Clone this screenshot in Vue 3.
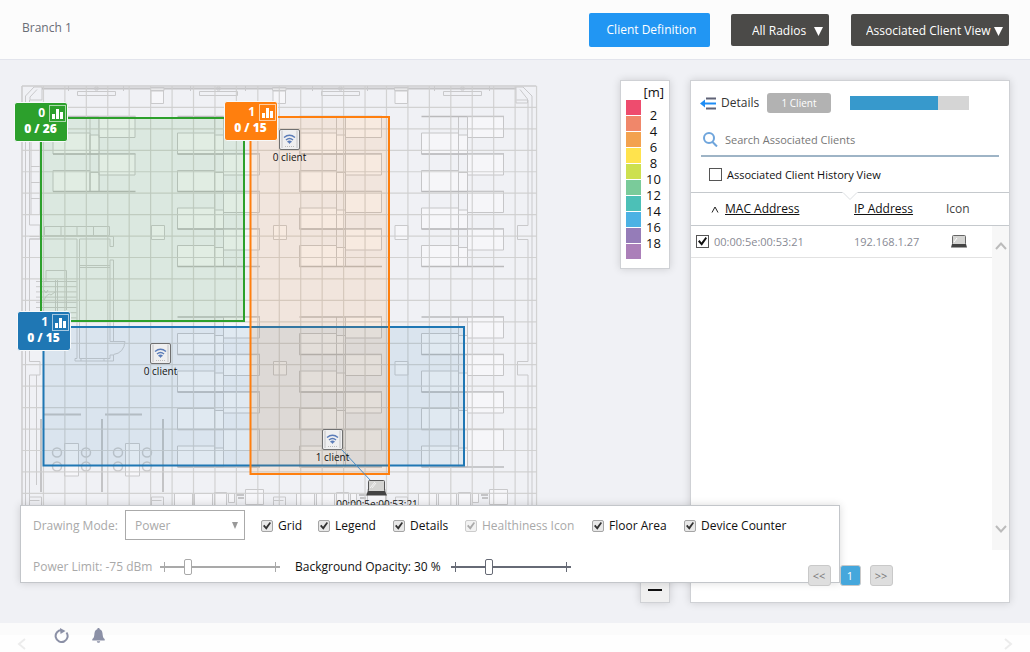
<script setup>
import { ref } from 'vue'

const radio = ref('All Radios')
const view = ref('Associated Client View')
const mode = ref('Power')
const powerLimit = ref(-75)
const opacity = ref(30)
const search = ref('')
const history = ref(false)
const usage = ref(74)

const legend = [
  { color: '#ee4c6e', label: '2' },
  { color: '#f0876a', label: '4' },
  { color: '#f3a24f', label: '6' },
  { color: '#ffe34d', label: '8' },
  { color: '#cde04e', label: '10' },
  { color: '#7acb9a', label: '12' },
  { color: '#4cc0b7', label: '14' },
  { color: '#4cb2e4', label: '16' },
  { color: '#957cb8', label: '18' },
  { color: '#ab7fb9', label: '' }
]

const toggles = ref([
  { id: 'grid', label: 'Grid', on: true },
  { id: 'legend', label: 'Legend', on: true },
  { id: 'details', label: 'Details', on: true },
  { id: 'health', label: 'Healthiness Icon', on: true, disabled: true },
  { id: 'floor', label: 'Floor Area', on: true },
  { id: 'counter', label: 'Device Counter', on: true }
])

const clients = ref([{ mac: '00:00:5e:00:53:21', ip: '192.168.1.27', on: true }])

const gridX = Array.from({ length: 25 }, (_, i) => 22 + i * 21.44)
const gridY = Array.from({ length: 20 }, (_, i) => 86 + i * 21.44)

const desks = []
for (const x of [177.5, 299.5, 421.5]) {
  for (const y of [116.5, 317]) desks.push({ x, y, rows: 4 })
}
desks.push({ x: 53, y: 116.5, rows: 2 })

const bays = [0, 122, 244, 366]
const chairs = []
for (const dx of [0, 61]) {
  for (const x of [57, 86]) for (const y of [452.5, 466.5]) chairs.push({ x: x + dx, y })
}
const stairs = Array.from({ length: 8 }, (_, i) => 281.5 + i * 5.2)

const accessPoints = [
  { x: 279, y: 129, label: '0 client' },
  { x: 150, y: 343, label: '0 client' },
  { x: 322, y: 429, label: '1 client' }
]
const badges = [
  { kind: 'green', count: 0, total: '0 / 26' },
  { kind: 'orange', count: 1, total: '0 / 15' },
  { kind: 'blue', count: 1, total: '0 / 15' }
]
</script>

<template>
  <div class="page">
    <header class="topbar">
      <h1>Branch 1</h1>
      <button class="primary" type="button">Client Definition</button>
      <span class="dark radio">
        <select v-model="radio" aria-label="Radios"><option>All Radios</option></select>
        <svg viewBox="0 0 9 9"><path d="M0 0h9L4.500 9z" /></svg>
      </span>
      <span class="dark view">
        <select v-model="view" aria-label="View"><option>Associated Client View</option></select>
        <svg viewBox="0 0 9 9"><path d="M0 0h9L4.500 9z" /></svg>
      </span>
    </header>

    <main>
      <section class="map" aria-label="Floor map">
        <svg class="plan" viewBox="20 80 520 430" width="520" height="430">
          <g class="walls">
            <path d="M22 86H536M22 86V510M25.500 96V510M29.500 100V225H40V239H29.500M29.500 239V361.500H40V375H29.500V510M36.500 375V485M31 141.500V215M40 141.500V215M31 166.500H40M31 182.500H40M31 198.500H40" />
            <path d="M25.500 96L34 87H42V100H30V97L37 89.500" />
            <path d="M532 96L523 87H516V103H527.500V99L520 89.500M516.500 100H527M532 96V510M528 100V225.500H517.500V239.500H528V361.500H517.500V375H528V510" />
            <path class="heavy" d="M42 88.500H516" />
            <g v-for="dx in bays" :key="'b' + dx">
              <path v-if="dx < 366" class="fill" :d="`M${150.500 + dx} 87.500h13.500v3h-13.500zM${151 + dx} 91h12.500v12.500h-12.500z`" />
              <path :d="`M${77.500 + dx} 91.500h38v4h-38zM${95 + dx} 87h3v3h-3zM${68.500 + dx} 86v5M${123.500 + dx} 86v5`" />
            </g>
            <path class="fill" d="M151.500 225.500h13v14h-13zM273.500 225.500h13v14h-13zM395 225.500h13v14h-13zM273.500 361.500h13v13.500h-13zM395 361.500h13v13.500h-13z" />
            <path d="M44.500 226.500h65v9h-65zM61 226.500v9M77 226.500v9M93.500 226.500v9M29.500 236.500H113.500V246.500H110V239H79.500V358.500H110V355H113.500V361H75V358.500H77V239H29.500" />
            <path d="M79.500 265.500H110M79.500 267.500H110M110 341.500V260H113.500V341.500M110 341.500H125Q124 353 113.500 354.500M81 358.500v2.500M104 358.500v2.500" />
            <path d="M46 281V270.500H66.500V310M55.500 280V312M57.500 280V312M44 300Q48 292 51 295L55 292M44 290l2 3 2-3" />
            <path v-for="y in stairs" :key="y" :d="`M36 ${y}H76.500`" />
          </g>

          <g v-for="(d, i) in desks" :key="'d' + i" class="desk" :transform="`translate(${d.x} ${d.y})`">
            <path class="mid" :d="`M37 0V${d.rows * 37.500}M46 0V${d.rows * 37.500}`" />
            <path class="thick" d="M0 0H82.500" />
            <g v-for="r in d.rows" :key="r" :transform="`translate(0 ${(r - 1) * 37.500})`">
              <path class="fill" d="M0 16.500H37V37.500H0zM46 0H82V21H46zM37 18.500H46V37.500H37z" />
              <path class="thick" d="M0 37.500H82.500" />
            </g>
          </g>

          <g class="walls">
            <path class="heavy" d="M44 414.500H81M105 414.500H142M41 419V492M102 419V492M163 419V492" />
            <path class="fill" d="M64.500 443.500h14v32.500h-14zM125.500 443.500h14v32.500h-14z" />
            <circle v-for="(c, i) in chairs" :key="'c' + i" :cx="c.x" :cy="c.y" r="4.500" />
            <g v-for="dx in bays" :key="'f' + dx">
              <path :d="`M${29.500 + dx} 510V497h12v13M${29.500 + dx} 500.500h10`" />
              <path v-if="dx < 366" class="fill" :d="`M${174.500 + dx} 493.500h18v12h-18zM${194.500 + dx} 493.500h18v12h-18zM${214.500 + dx} 492.500h12v13h-12zM${228.500 + dx} 493.500h6v9h-6zM${245.500 + dx} 489.500h18v15h-18z`" />
              <path v-if="dx < 366" class="heavy" :d="`M${237 + dx} 495h7M${238 + dx} 498h6`" />
            </g>
          </g>

          <g class="grid">
            <path v-for="x in gridX" :key="'x' + x" :d="`M${x} 86V510`" />
            <path v-for="y in gridY" :key="'y' + y" :d="`M22 ${y}H536.500`" />
          </g>

          <rect class="zone z-green" x="41" y="118" width="203" height="203" />
          <rect class="zone z-blue" x="43.500" y="327" width="420.500" height="138.500" />
          <rect class="zone z-orange" x="250.500" y="117" width="138.500" height="357" />

          <path class="link" d="M342 450L371 481" />
          <g v-for="(ap, i) in accessPoints" :key="'ap' + i" :transform="`translate(${ap.x} ${ap.y})`">
            <rect class="ap" x=".5" y=".5" width="20" height="20" rx="1.500" />
            <path class="ap-in" d="M3 1.500V19M18 1.500V19" />
            <path class="wifi" d="M5 8.500Q10.500 4 16 8.500M7 11Q10.500 8 14 11M8.500 13Q10.500 11.500 12.500 13" />
            <path class="wifi-dot" d="M9 13h3l-1.500 2z" />
            <path class="ap-dots" d="M6 17.500H16" />
            <text x="10.500" y="32">{{ ap.label }}</text>
          </g>
          <g transform="translate(366 480)">
            <rect x="2.500" y=".500" width="16" height="11" rx="1" fill="#d4d4d2" stroke="#555" />
            <path d="M4 8L9 2M6 8L10 3" stroke="#f4f4f4" />
            <path d="M2 11H19L21 15.500H0z" fill="#444" />
            <text x="11" y="28">00:00:5e:00:53:21</text>
          </g>
        </svg>

        <div v-for="b in badges" :key="b.kind" :class="['badge', b.kind]">
          <span>{{ b.count }}</span>
          <svg viewBox="0 0 17 17"><rect x=".5" y=".5" width="16" height="16" /><path d="M3 9h3v5H3zM7 4h3v10H7zM11 7h3v7h-3z" /></svg>
          <strong>{{ b.total }}</strong>
        </div>
      </section>

      <section class="tools">
        <div class="legend">
          <div class="unit">[m]</div>
          <div v-for="(l, i) in legend" :key="i" class="step">
            <svg viewBox="0 0 15 15"><rect width="15" height="15" :fill="l.color" /></svg>
            <span>{{ l.label }}</span>
          </div>
        </div>
        <button class="zoom-out" type="button" aria-label="Zoom out"><i></i></button>
      </section>

      <aside class="details">
        <div class="head">
          <svg class="collapse" viewBox="0 0 16 13"><path d="M6 1.500h10M6 11.500h10" stroke="#5f6377" /><path d="M3 6.500h13" stroke="#1e8df5" /><path d="M0 6.500l5-4v8z" fill="#1e8df5" stroke="none" /></svg>
          <h2>Details</h2>
          <button class="pill" type="button">1 Client</button>
          <div class="bar"><div :style="{ width: usage + '%' }"></div></div>
        </div>
        <label class="search">
          <svg viewBox="0 0 15 15"><circle cx="6" cy="6" r="5" /><path d="M9.500 10L14 14.500" /></svg>
          <input v-model="search" type="text" placeholder="Search Associated Clients" aria-label="Search Associated Clients">
        </label>
        <label class="history"><input v-model="history" class="square" type="checkbox">Associated Client History View</label>
        <div class="list">
          <svg class="notch" viewBox="0 0 16 9"><path d="M0 0H16L8 7.500z" fill="#fff" /><path d="M1 .5L8 7.500L15 .5" fill="none" stroke="#dcdfe2" /></svg>
          <table>
            <thead>
              <tr>
                <th class="c-mac"><svg viewBox="0 0 8 7"><path d="M1 6.500L4 1L7 6.500" /></svg><a href="#">MAC Address</a></th>
                <th class="c-ip"><a href="#">IP Address</a></th>
                <th>Icon</th>
              </tr>
            </thead>
            <tbody>
              <tr v-for="c in clients" :key="c.mac">
                <td><label><input v-model="c.on" class="square" type="checkbox">{{ c.mac }}</label></td>
                <td>{{ c.ip }}</td>
                <td class="c-icon"><svg viewBox="0 0 16 13"><rect x="1.500" y=".5" width="13" height="9" rx="1" fill="#d4d4d2" stroke="#666" /><path d="M3 7l3-4" stroke="#fff" /><path d="M1 9H15L16 12.500H0z" fill="#444" /></svg></td>
              </tr>
            </tbody>
          </table>
          <div class="rail">
            <svg viewBox="0 0 12 9"><path d="M1 8L6 2.500L11 8" /></svg>
            <svg viewBox="0 0 12 9"><path d="M1 1L6 6.500L11 1" /></svg>
          </div>
        </div>
        <nav class="pager" aria-label="Pages">
          <button type="button">&lt;&lt;</button>
          <button type="button" class="current">1</button>
          <button type="button">&gt;&gt;</button>
        </nav>
      </aside>

      <section class="settings">
        <div class="row first">
          <label class="off" for="mode">Drawing Mode:</label>
          <span class="mode">
            <select id="mode" v-model="mode" disabled><option>Power</option></select>
            <svg viewBox="0 0 6 7"><path d="M0 0h6L3 7z" /></svg>
          </span>
          <label v-for="t in toggles" :key="t.id" :class="{ off: t.disabled }">
            <input v-model="t.on" class="soft" type="checkbox" :disabled="t.disabled">{{ t.label }}
          </label>
        </div>
        <div class="row second">
          <label class="off" for="power">Power Limit: {{ powerLimit }} dBm</label>
          <span class="slider off"><input id="power" v-model="powerLimit" type="range" min="-90" max="-20" disabled></span>
          <label for="opacity">Background Opacity: {{ opacity }} %</label>
          <span class="slider"><input id="opacity" v-model="opacity" type="range" min="0" max="100"></span>
        </div>
      </section>
    </main>

    <footer>
      <svg class="prev" viewBox="0 0 9 12"><path d="M8 1L2 6l6 5" /></svg>
      <button type="button" aria-label="Refresh"><svg viewBox="0 0 15 15"><path d="M12.500 4.500A6 6 0 1 1 7.500 2" fill="none" stroke="#8b90a6" stroke-width="2" /><path d="M6 0L11.500 3L6.500 6z" fill="#8b90a6" /></svg></button>
      <button type="button" aria-label="Notifications"><svg viewBox="0 0 15 15"><path d="M7.500 0c1 0 1.200.7 1.200 1.300C11 2 11.500 4 11.700 7c.2 2.500 1 3.200 2 4v1.500H1.300V11c1-.8 1.800-1.500 2-4C3.500 4 4 2 6.300 1.300 6.300.7 6.500 0 7.500 0zM5.800 13.200h3.400c-.3 2.200-3.100 2.200-3.400 0z" fill="#8b90a6" /></svg></button>
      <svg class="next" viewBox="0 0 9 12"><path d="M1 1l6 5-6 5" /></svg>
    </footer>
  </div>
</template>

<style>
body { margin: 0; background: #f0f1f5; }
</style>

<style scoped>
* { box-sizing: border-box; }
.page {
  display: flex;
  flex-direction: column;
  min-height: 100vh;
  font-family: "Open Sans", "Noto Sans", sans-serif;
  font-size: 12px;
  line-height: 16px;
  color: #111;
}
button, select, input { font: inherit; margin: 0; padding: 0; }
svg { display: block; flex: none; }
h1, h2 { margin: 0; font-weight: 400; font-size: 12px; }

.topbar {
  display: flex;
  align-items: center;
  height: 60px;
  padding: 0 21px 0 22px;
  background: #fcfcfc;
  border-bottom: 1px solid #e2e4ec;
}
h1 { margin-right: auto; padding-bottom: 4px; color: #6a6d76; }
.primary { width: 121px; height: 34px; padding-left: 4px; border: 0; border-radius: 2px; background: #2196f3; color: #fff; }
.dark { position: relative; height: 32px; }
.dark select { appearance: none; width: 100%; height: 32px; padding-top: 2px; border: 0; border-radius: 2px; background: #4b4a48; color: #fff; }
.dark svg { position: absolute; right: 6px; top: 13px; width: 9px; height: 9px; fill: #fff; }
.radio { width: 98px; margin-left: 21px; }
.radio select { padding-left: 21px; }
.view { width: 158px; margin-left: 22px; }
.view select { padding-left: 15px; }

main {
  position: relative;
  flex: 1;
  display: flex;
  gap: 20px;
  padding: 20px;
  background: #f0f1f5;
}
.map { position: relative; flex: 1; min-width: 0; overflow: visible; }
.plan { position: absolute; left: 0; top: 0; }
.plan text { font-size: 10px; fill: #111; text-anchor: middle; }
.walls path, .walls circle { fill: none; stroke: #c9c9cb; stroke-width: 1; }
.walls circle { stroke-width: 1.5; }
.walls .heavy { stroke: #c4c4c6; stroke-width: 2; }
.walls .fill { fill: rgba(255, 255, 255, .4); }
.desk path { fill: none; stroke: #c6c6c8; }
.desk .fill { fill: rgba(255, 255, 255, .4); }
.desk .thick { stroke: #bababc; stroke-width: 1.5; }
.grid path { stroke: #cecece; stroke-width: 1.2; stroke-opacity: .9; }
.zone { stroke-width: 2; }
.z-green { fill: rgba(44, 160, 44, .1); stroke: #2ca02c; }
.z-blue { fill: rgba(31, 119, 180, .1); stroke: #1f77b4; }
.z-orange { fill: rgba(255, 127, 14, .1); stroke: #ff7f0e; }
.link { stroke: #4a8cc4; }
.ap { fill: #efeff0; stroke: #707070; }
.ap-in { stroke: #c4c4c6; }
.wifi { fill: none; stroke: #5b7cb8; stroke-width: 1.5; }
.wifi-dot { fill: #5b7cb8; }
.ap-dots { stroke: #bbb; stroke-dasharray: 1 1; }

.badge {
  position: absolute;
  display: grid;
  grid-template-columns: 1fr 17px;
  grid-template-rows: 16px 16px;
  column-gap: 4px;
  width: 54px;
  height: 40px;
  padding: 2px 1px 2px 0;
  border: 1px solid #f7f9fa;
  border-radius: 3px;
  color: #fff;
  font-weight: 700;
  font-size: 12px;
  line-height: 16px;
}
.badge span { text-align: right; }
.badge strong { grid-column: 1 / 3; text-align: center; }
.badge svg { width: 17px; height: 17px; fill: #fff; }
.badge rect { fill: none; stroke: rgba(255, 255, 255, .6); }
.green { left: -6px; top: 22px; background: #2ca02c; }
.orange { left: 204px; top: 21px; background: #ff7f0e; }
.blue { left: -3px; top: 231px; background: #1f77b4; }

.tools { display: flex; flex-direction: column; justify-content: space-between; align-items: flex-end; }
.legend { width: 50px; padding: 4px 5px 8px; background: #fff; border: 1px solid #cfd1d5; box-shadow: 0 0 8px rgba(0, 0, 0, .15); font-size: 13px; }
.unit { text-align: right; line-height: 15px; }
.step { display: flex; height: 16px; }
.step svg { width: 15px; height: 15px; }
.step span { flex: 1; padding: 7px 0 0 2px; text-align: center; }
.zoom-out { display: flex; justify-content: center; width: 30px; height: 30px; padding-top: 15px; background: #f0f0f0; border: 1px solid #cfd1d5; box-shadow: 0 0 8px rgba(0, 0, 0, .15); }
.zoom-out i { width: 14px; height: 2px; background: #111; }

.details { display: flex; flex-direction: column; width: 320px; background: #fff; border: 1px solid #cfd1d5; box-shadow: 0 0 8px rgba(0, 0, 0, .15); }
.head { display: flex; align-items: center; height: 44px; padding-left: 9px; }
.collapse { width: 16px; height: 13px; stroke-width: 2; fill: none; }
h2 { width: 46px; margin-left: 5px; color: #333; }
.pill { width: 64px; height: 20px; border: 0; border-radius: 3px; background: #b2b2b2; color: #fff; font-size: 10px; }
.bar { width: 119px; height: 14px; margin-left: 19px; background: #d5d5d5; }
.bar div { height: 100%; background: #3799cc; }
.search { display: flex; align-items: center; height: 32px; margin: 0 10px; padding: 0 2px 1px; border-bottom: 2px solid #9eb4c6; }
.search svg { width: 15px; height: 15px; fill: none; stroke: #6fa5dc; stroke-width: 2; }
.search input { flex: 1; margin-left: 7px; border: 0; outline: 0; background: none; font-size: 11px; }
.search input::placeholder { color: #777; opacity: 1; }
.history { display: flex; align-items: center; gap: 5px; height: 35px; padding-left: 18px; font-size: 11px; }
.list { position: relative; height: 358px; border-top: 1px solid #c5c9cd; }
.notch { position: absolute; left: 151px; top: -1px; width: 16px; height: 9px; }
table { width: 100%; table-layout: fixed; border-collapse: separate; border-spacing: 0; }
th { height: 33px; padding: 0; border-bottom: 1px solid #c5c9cd; font-weight: 400; text-align: left; color: #444; font-size: 12px; }
th a { color: #111; font-size: 12px; text-underline-offset: 1px; }
th svg { display: inline-block; width: 8px; height: 7px; margin: 0 6px 0 20px; fill: none; stroke: #222; }
td { height: 32px; padding: 0; border-bottom: 1px solid #e2e2e2; color: #888a94; font-size: 11px; }
td label { display: flex; align-items: center; gap: 5px; padding-left: 5px; }
.c-mac { width: 163px; }
.c-ip { width: 92px; }
.c-icon svg { width: 16px; height: 13px; margin-left: 5px; }
.rail { position: absolute; right: 0; top: 33px; bottom: 0; width: 17px; display: flex; flex-direction: column; justify-content: space-between; align-items: center; padding: 15px 0 16px; background: #f7f7f7; }
.rail svg { width: 12px; height: 9px; fill: none; stroke: #bbb; stroke-width: 2; }
.pager { position: relative; z-index: 3; display: flex; justify-content: center; gap: 9px; margin-top: 15px; }
.pager button { width: 23px; height: 21px; border: 1px solid #c9c9c9; border-radius: 3px; background: #dedede; color: #777; font-size: 11px; line-height: 18px; }
.pager .current { width: 21px; background: #45a7dc; color: #fff; }

.square { appearance: none; flex: none; position: relative; width: 13px; height: 13px; border: 1px solid #555; background: #fff; }
.square:checked::before, .soft:checked::before {
  content: "";
  position: absolute;
  inset: 1px;
  background: #111;
  clip-path: polygon(0 50%, 18% 34%, 38% 60%, 84% 0, 100% 14%, 42% 96%);
}
.soft { appearance: none; position: relative; flex: none; width: 12px; height: 12px; border: 1px solid #a5a5a5; border-radius: 2px; background: #e8e8e8; }
.soft:checked::before { background: #333; }
.soft:disabled { border-color: #ccc; background: #f2f2f2; }
.soft:disabled::before { background: #aaa; }

.settings {
  position: absolute;
  z-index: 2;
  left: 20px;
  right: 190px;
  bottom: 40px;
  height: 78px;
  padding: 4px 12px 0;
  background: #fff;
  border: 1px solid #c3c6ca;
  box-shadow: 0 0 8px rgba(0, 0, 0, .15);
}
.row { display: grid; align-items: center; white-space: nowrap; }
.first { grid-template-columns: 92px 136px 57px 75px 72px 127px 92px auto; height: 32px; }
.second { grid-template-columns: 127px 135px 156px 120px; height: 40px; margin-top: 5px; }
.row label { display: flex; align-items: center; gap: 5px; }
.off { color: #a9a9a9; }
.mode { position: relative; align-self: start; width: 120px; height: 30px; }
.mode select { appearance: none; width: 100%; height: 30px; padding: 2px 0 0 9px; border: 1px solid #aaa; border-radius: 0; background: #fff; color: #a9a9a9; opacity: 1; }
.mode svg { position: absolute; right: 7px; top: 12px; width: 6px; height: 7px; fill: #999; }
.slider { position: relative; display: block; width: 120px; height: 16px; color: #666a75; }
.slider.off { color: #a9a9a9; }
.slider::before { content: ""; position: absolute; left: 4px; right: 4px; top: 3px; height: 10px; border: solid currentColor; border-width: 0 1px; }
.slider input { appearance: none; position: relative; display: block; width: 100%; height: 16px; background: none; color: inherit; }
.slider input::-webkit-slider-runnable-track { height: 16px; background: linear-gradient(currentColor, currentColor) center / 100% 2px no-repeat; }
.slider input::-webkit-slider-thumb { appearance: none; width: 8px; height: 16px; border: 1px solid currentColor; border-radius: 2px; background: #fff; }

footer { display: flex; align-items: flex-start; height: 29px; padding: 5px 17px 0; background: linear-gradient(#fbfbfb 12px, #fefefe 12px); }
footer button { width: 15px; height: 15px; border: 0; background: none; }
footer button svg { width: 15px; height: 15px; }
footer button + button { margin-left: 22px; }
.prev, .next { width: 9px; height: 12px; margin-top: 10px; fill: none; stroke: #ececec; stroke-width: 2; }
.prev { margin-right: 28px; }
.next { margin-left: auto; }
</style>
